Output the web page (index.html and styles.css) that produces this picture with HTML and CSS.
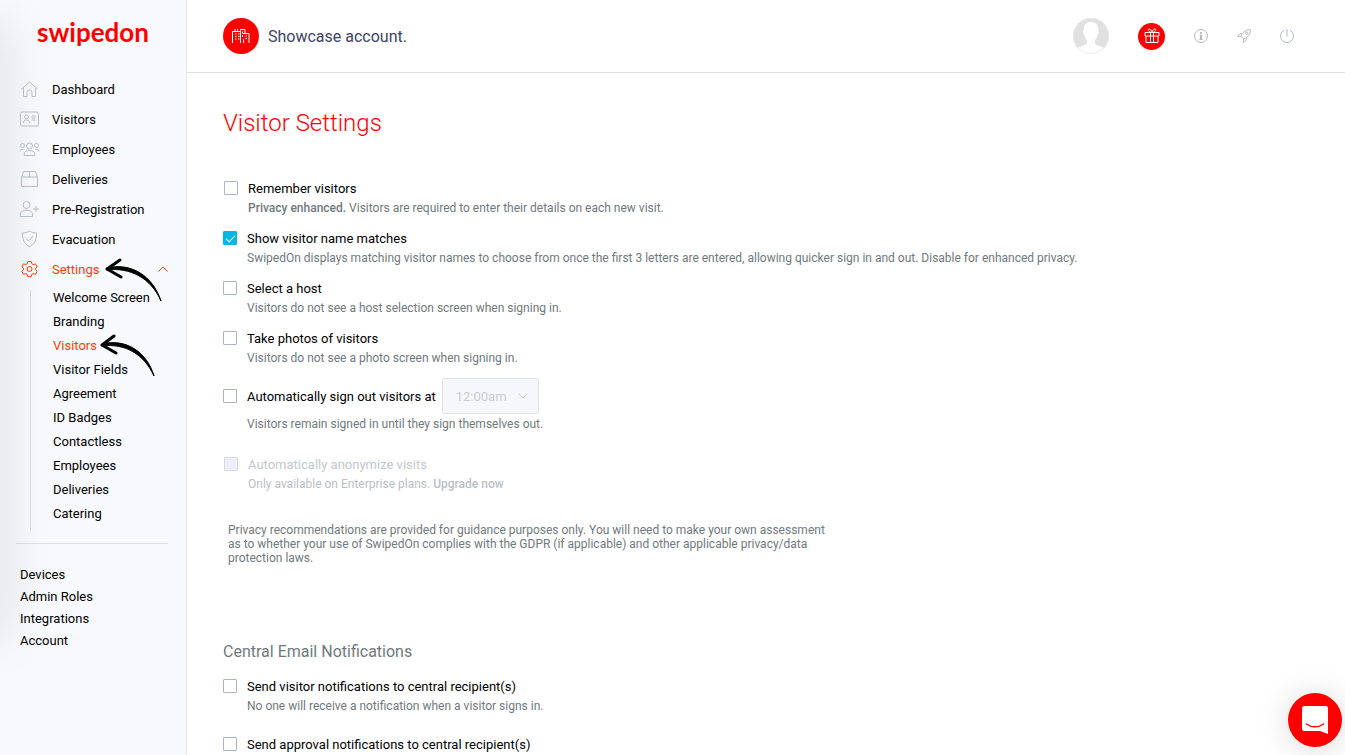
FILE: index.html
```html
<!DOCTYPE html>
<html lang="en">
<head>
    <meta charset="UTF-8">
    <title>Visitor Settings</title>
    <link rel="stylesheet" href="styles.css">
</head>
<body>
    <aside class="sidebar">
        <a href="#" class="logo">swipedon</a>
        <nav>
            <ul class="menu">
                <li><a href="#">
                    <svg viewBox="0 0 20 18"><path d="M2 9L10 2l8 7M4 8v8.500h3.500v-4a2.500 2.500 0 0 1 5 0v4H16V8"/></svg>
                    Dashboard</a></li>
                <li><a href="#">
                    <svg viewBox="0 0 20 18"><rect x="1" y="2" width="18" height="14" rx="1.500"/><circle cx="7" cy="7" r="1.900"/><path d="M3.800 13c0-4 6.400-4 6.400 0M12 6h4M12 8h4M12 10h4"/></svg>
                    Visitors</a></li>
                <li><a href="#">
                    <svg viewBox="0 0 20 18"><circle cx="10" cy="6" r="3"/><circle cx="3" cy="5.500" r="2"/><circle cx="17" cy="5.500" r="2"/><path d="M4.800 15.500v-2c0-4 10.400-4 10.400 0v2zM.5 11.500c0-1.800 1.500-2.300 3.500-2M19.500 11.500c0-1.800-1.500-2.300-3.500-2"/></svg>
                    Employees</a></li>
                <li><a href="#">
                    <svg viewBox="0 0 20 18"><path d="M2 7l2-5.500h12L18 7v9.500H2zM2 7h16M10 1.500V7"/></svg>
                    Deliveries</a></li>
                <li><a href="#">
                    <svg viewBox="0 0 20 18"><circle cx="7" cy="5" r="3.500"/><path d="M.7 16.500v-2.500c0-5 12.300-5 12.300 0v2.500zM16.500 6v6M13.500 9h6"/></svg>
                    Pre-Registration</a></li>
                <li><a href="#">
                    <svg viewBox="0 0 20 18"><path d="M10 1c2.500 1.500 4.500 2 7 2 .3 6-1.500 11-7 13.800C4.500 14 2.700 9 3 3c2.500 0 4.500-.5 7-2zM6.300 8.500L9 11l4.500-5"/></svg>
                    Evacuation</a></li>
                <li class="active"><a href="#">
                    <svg viewBox="0 0 20 18"><path d="M8.300 1.500h3.400l.6 2.300 1.400.8 2.300-.7 1.700 3L16 8.200v1.600l1.700 1.500-1.700 3-2.300-.7-1.400.8-.6 2.300H8.300l-.6-2.300-1.400-.8-2.300.7-1.700-3L4 9.800V8.200L2.300 6.900 4 3.900l2.300.7 1.400-.8z"/><circle cx="10" cy="9" r="2.500"/></svg>
                    Settings
                    <svg class="chevron" viewBox="0 0 10 6"><path d="M.5 5.500L5 1l4.500 4.500"/></svg></a>
                    <svg class="arrow arrow-settings" viewBox="0 0 60 48"><path d="M17 2L4 11l14 8" stroke-width="3"/><path d="M4 10C28 4 50 18 58 43 48 20 27 9 4 12z" fill="#000"/></svg>
                </li>
            </ul>
            <ul class="submenu">
                <li><a href="#">Welcome Screen</a></li>
                <li><a href="#">Branding</a></li>
                <li class="active"><a href="#">Visitors</a>
                    <svg class="arrow arrow-visitors" viewBox="0 0 60 48"><path d="M16 2L4 11l14 8" stroke-width="3"/><path d="M4 10C28 4 49 18 56 42 46 20 27 9 4 12z" fill="#000"/></svg>
                </li>
                <li><a href="#">Visitor Fields</a></li>
                <li><a href="#">Agreement</a></li>
                <li><a href="#">ID Badges</a></li>
                <li><a href="#">Contactless</a></li>
                <li><a href="#">Employees</a></li>
                <li><a href="#">Deliveries</a></li>
                <li><a href="#">Catering</a></li>
            </ul>
            <ul class="extra">
                <li><a href="#">Devices</a></li>
                <li><a href="#">Admin Roles</a></li>
                <li><a href="#">Integrations</a></li>
                <li><a href="#">Account</a></li>
            </ul>
        </nav>
    </aside>

    <div class="page">
        <header class="topbar">
            <span class="badge">
                <svg viewBox="0 0 18 16"><path d="M.5 15V3.500h8M3 3V1M5.500 3V1M8.500 15V1.500h4.500V5M11 5.500h6V15M3 6h1.500M6 6h1.500M3 8.500h1.500M6 8.500h1.500M3 11h1.500M6 11h1.500M10.500 3.500v2M10.500 7v2M13.500 8h1.500M13.500 10.500h1.500M11.500 15v-4"/></svg>
            </span>
            <span class="account">Showcase account.</span>
            <button class="avatar" aria-label="Profile">
                <svg viewBox="0 0 36 36"><circle cx="18" cy="18" r="18" fill="#e0e0e0"/><path d="M18 4c5 0 7.500 3 7.300 8 .9 0 .7 3.500-.6 4.500-.5 3-1.700 4.500-2.700 5.500v3.500c2 2.500 7 2.500 10.500 5.500a18 18 0 0 1-29 0C7 28 12 28 14 25.500V22c-1-1-2.200-2.500-2.700-5.500-1.300-1-1.500-4.500-.6-4.500C10.500 7 13 4 18 4z" fill="#fff"/><circle cx="18" cy="18" r="17.500" fill="none" stroke="#e8e8e8"/></svg>
            </button>
            <button class="gift" aria-label="Rewards">
                <svg viewBox="0 0 16 16"><path d="M1 4.500h14v3.500H1zM2 8v6.500h12V8M6.500 4.500v10M9.500 4.500v10M8 4.500C5 4.500 3 1.500 5 1c1.500-.4 2.700 1.500 3 3.500.3-2 1.500-3.900 3-3.500 2 .5 0 3.500-3 3.500z"/></svg>
            </button>
            <button class="tool" aria-label="Information">
                <svg viewBox="0 0 14 14"><circle cx="7" cy="7" r="6.500"/><path d="M7 6v4.500M7 3v1.700" stroke-width="2"/><path d="M5.500 6H7M5.300 10.500h3.400"/></svg>
            </button>
            <button class="tool" aria-label="What's new">
                <svg viewBox="0 0 15 15"><path d="M14.300.7c-4-.2-7 1.500-9.300 5.300l-.5 2 2.500 2.500 2-.5c3.800-2.300 5.500-5.300 5.300-9.300zM5.500 5H3L.7 8.300 4.500 8M10 9.500V12l-3.300 2.300.3-3.800"/><circle cx="10.500" cy="4.500" r="1.300"/></svg>
            </button>
            <button class="tool" aria-label="Log out">
                <svg viewBox="0 0 14 14"><path d="M4.200 1.200a6.500 6.500 0 1 0 5.600 0M7 0v7.500"/></svg>
            </button>
        </header>

        <main class="content">
            <h1>Visitor Settings</h1>
            <div class="option inset">
                <div class="field"><input type="checkbox" id="remember"><label for="remember">Remember visitors</label></div>
                <p><b>Privacy enhanced.</b> Visitors are required to enter their details on each new visit.</p>
            </div>
            <div class="option">
                <div class="field"><input type="checkbox" id="matches" checked><label for="matches">Show visitor name matches</label></div>
                <p>SwipedOn displays matching visitor names to choose from once the first 3 letters are entered, allowing quicker sign in and out. Disable for enhanced privacy.</p>
            </div>
            <div class="option">
                <div class="field"><input type="checkbox" id="host"><label for="host">Select a host</label></div>
                <p>Visitors do not see a host selection screen when signing in.</p>
            </div>
            <div class="option">
                <div class="field"><input type="checkbox" id="photos"><label for="photos">Take photos of visitors</label></div>
                <p>Visitors do not see a photo screen when signing in.</p>
            </div>
            <div class="option">
                <div class="field">
                    <input type="checkbox" id="signout"><label for="signout">Automatically sign out visitors at</label>
                    <div class="select">
                        <select aria-label="Sign out time" disabled><option>12:00am</option></select>
                        <svg viewBox="0 0 10 6"><path d="M.5.500L5 5 9.500.500"/></svg>
                    </div>
                </div>
                <p>Visitors remain signed in until they sign themselves out.</p>
            </div>
            <div class="option inset disabled">
                <div class="field"><input type="checkbox" id="anonymize" disabled><label for="anonymize">Automatically anonymize visits</label></div>
                <p>Only available on Enterprise plans. <a href="#">Upgrade now</a></p>
            </div>
            <p class="note">Privacy recommendations are provided for guidance purposes only. You will need to make your own assessment as to whether your use of SwipedOn complies with the GDPR (if applicable) and other applicable privacy/data protection laws.</p>

            <h2>Central Email Notifications</h2>
            <div class="option spaced">
                <div class="field"><input type="checkbox" id="central"><label for="central">Send visitor notifications to central recipient(s)</label></div>
                <p>No one will receive a notification when a visitor signs in.</p>
            </div>
            <div class="option">
                <div class="field"><input type="checkbox" id="approval"><label for="approval">Send approval notifications to central recipient(s)</label></div>
            </div>
        </main>
    </div>

    <button class="chat" aria-label="Open chat">
        <svg viewBox="0 0 26 28"><path d="M2.500 0h21A2.500 2.500 0 0 1 26 2.500V28l-8-3H2.500A2.500 2.500 0 0 1 0 22.500v-20A2.500 2.500 0 0 1 2.500 0z" fill="#fff"/><path d="M4.500 18c5 3.800 12 3.800 17 0" fill="none" stroke="#f00" stroke-width="1.500" stroke-linecap="round"/></svg>
    </button>
</body>
</html>
```
FILE: styles.css
```css
* {
    box-sizing: border-box;
}
body {
    display: flex;
    height: 100vh;
    margin: 0;
    overflow: hidden;
    background-color: #fff;
    color: #000;
    font-family: Roboto, sans-serif;
    font-size: 13px;
}
ul {
    margin: 0;
    padding: 0;
    list-style: none;
}
a {
    color: inherit;
    text-decoration: none;
}
button {
    flex: none;
    padding: 0;
    border: 0;
    background: none;
}
svg {
    display: block;
    flex: none;
    fill: none;
    stroke: currentColor;
}

/* Sidebar */
.sidebar {
    position: relative;
    flex: none;
    width: 187px;
    overflow: hidden;
    background-color: #f8f9fc;
    border-right: 1px solid #e6e8ec;
}
.sidebar::before {
    content: "";
    position: absolute;
    top: 20px;
    left: -20px;
    width: 20px;
    height: 620px;
    box-shadow: 0 0 50px rgba(0, 0, 0, 0.18);
}
.logo {
    display: block;
    padding: 16px 0 26px 37px;
    color: #f00;
    font-family: Lato, sans-serif;
    font-size: 26px;
    font-weight: 700;
    line-height: 32px;
}
.menu a {
    display: flex;
    align-items: center;
    height: 30px;
    padding: 0 18px 0 19px;
    gap: 12px;
}
.menu svg {
    width: 21px;
    height: 18px;
    color: #b3bcc7;
}
.menu li {
    position: relative;
}
.menu .active,
.menu .active a svg,
.submenu .active {
    color: #ff3d00;
}
.menu .chevron {
    width: 10px;
    height: 6px;
    margin-left: auto;
}
.submenu {
    margin: 6px 0 0 30px;
    padding-left: 22px;
    border-left: 1px solid #d9dce8;
}
.submenu li {
    position: relative;
    height: 24px;
    line-height: 16px;
}
.extra {
    margin: 13px 18px 0 16px;
    padding: 20px 0 0 4px;
    border-top: 1px solid #dcdfe3;
    line-height: 22px;
}
.menu .arrow,
.submenu .arrow {
    position: absolute;
    width: 60px;
    height: 48px;
    color: #000;
    stroke-linecap: round;
    stroke-linejoin: round;
}
.menu .arrow-settings {
    top: 4px;
    left: 103px;
}
.submenu .arrow-visitors {
    top: -4px;
    left: 45px;
}

/* Top bar */
.page {
    display: flex;
    flex: 1;
    flex-direction: column;
    min-width: 0;
}
.topbar {
    display: flex;
    flex: none;
    align-items: center;
    height: 73px;
    padding: 0 51px 0 36px;
    gap: 29px;
    border-bottom: 1px solid #dcdfe3;
}
.badge,
.gift,
.chat {
    display: flex;
    align-items: center;
    justify-content: center;
    border-radius: 50%;
    background-color: #f00;
    color: #fff;
}
.badge {
    width: 36px;
    height: 36px;
    margin-right: -20px;
}
.badge svg {
    width: 18px;
    height: 16px;
}
.account {
    margin-right: auto;
    color: #3c4366;
    font-size: 16px;
}
.avatar svg {
    width: 36px;
    height: 36px;
    stroke: none;
}
.gift {
    width: 27px;
    height: 27px;
}
.gift svg {
    width: 16px;
    height: 16px;
}
.tool {
    color: #b0b8c1;
}
.tool svg {
    width: 14px;
    height: 14px;
}

/* Settings */
.content {
    flex: 1;
    overflow: hidden;
    padding: 34px 36px 0;
}
h1 {
    margin: 0 0 39px;
    color: #f00;
    font-size: 24px;
    font-weight: 300;
    line-height: 32px;
}
h2 {
    margin: 75px 0 12px;
    color: #6f797d;
    font-size: 16px;
    font-weight: 400;
    line-height: 24px;
}
.option {
    margin-bottom: 10px;
}
.option.spaced {
    margin-bottom: 18px;
}
.option.inset {
    padding-left: 1px;
}
.option p {
    margin: 0;
    padding-left: 24px;
    color: #6f797d;
    font-size: 12px;
    line-height: 20px;
}
.option b {
    font-weight: 500;
}
.field {
    display: flex;
    align-items: center;
    min-height: 20px;
}
.field input {
    appearance: none;
    flex: none;
    width: 14px;
    height: 14px;
    margin: 0 10px 0 0;
    border: 1px solid #a9b4c2;
    border-radius: 1px;
    background-color: #fff;
}
.field input:checked {
    border-color: #00b8e6;
    background-color: #00b8e6;
}
.field input:checked::after {
    content: "";
    display: block;
    width: 8px;
    height: 4px;
    margin: 3px 2px;
    border: solid #fff;
    border-width: 0 0 1px 1px;
    transform: rotate(-45deg);
}
.select {
    display: grid;
    align-items: center;
    margin-left: 6px;
}
.select select {
    grid-area: 1 / 1;
    appearance: none;
    width: 97px;
    height: 36px;
    padding: 0 13px;
    border: 1px solid #e1e4ec;
    border-radius: 3px;
    background-color: #f5f7fb;
    color: #c8ccd2;
    font: inherit;
    opacity: 1;
}
.select svg {
    grid-area: 1 / 1;
    justify-self: end;
    width: 10px;
    height: 6px;
    margin-right: 11px;
    color: #c8ccd2;
}
.disabled {
    margin-top: 20px;
}
.field input:disabled {
    border-color: #d5dae6;
    background-color: #edf0fb;
}
.disabled label {
    color: #c3c7cc;
}
.disabled p {
    color: #b9c0c8;
}
.disabled p a {
    font-weight: 500;
}
.note {
    max-width: 600px;
    margin: 29px 0 0 5px;
    color: #6f797d;
    font-size: 12px;
    line-height: 14px;
}

.chat {
    position: fixed;
    right: 3px;
    bottom: 8px;
    width: 54px;
    height: 54px;
    box-shadow: 0 2px 32px rgba(0, 0, 0, 0.16);
}
.chat svg {
    width: 26px;
    height: 28px;
    stroke: none;
}
```
